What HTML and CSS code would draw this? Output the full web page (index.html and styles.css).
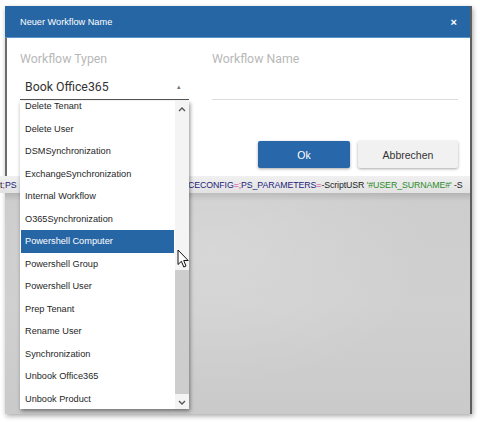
FILE: index.html
```html
<!DOCTYPE html>
<html lang="de">
<head>
<meta charset="utf-8">
<title>Neuer Workflow Name</title>
<link rel="stylesheet" href="styles.css">
</head>
<body>
<div class="shot">
  <header class="head">
    <span class="title">Neuer Workflow Name</span>
    <span class="close">×</span>
  </header>
  <div class="body">
    <div class="fields">
      <div class="field type">
        <label class="lbl">Workflow Typen</label>
        <div class="select"><span>Book Office365</span><span class="caret">▴</span></div>
      </div>
      <div class="field name">
        <label class="lbl">Workflow Name</label>
        <div class="input"></div>
      </div>
    </div>
    <div class="actions">
      <button class="btn ok">Ok</button>
      <button class="btn cancel">Abbrechen</button>
    </div>
  </div>
  <div class="code">
    <span class="code-left"><span class="k">t</span><span class="op">;</span><span class="v">PS</span></span>
    <span class="code-right"><span class="v">CECONFIG</span><span class="op">=;</span><span class="v">PS_PARAMETERS</span><span class="op">=</span><span class="k">-ScriptUSR </span><span class="s">'#USER_SURNAME#'</span><span class="k"> -S</span></span>
  </div>
  <div class="backdrop"></div>

  <div class="dropdown">
    <div class="list">
      <div class="items">
        <div class="item">Delete Tenant</div>
        <div class="item">Delete User</div>
        <div class="item">DSMSynchronization</div>
        <div class="item">ExchangeSynchronization</div>
        <div class="item">Internal Workflow</div>
        <div class="item">O365Synchronization</div>
        <div class="item active">Powershell Computer</div>
        <div class="item">Powershell Group</div>
        <div class="item">Powershell User</div>
        <div class="item">Prep Tenant</div>
        <div class="item">Rename User</div>
        <div class="item">Synchronization</div>
        <div class="item">Unbook Office365</div>
        <div class="item">Unbook Product</div>
      </div>
    </div>
    <div class="scrollbar">
      <div class="sb-btn"><svg width="8" height="5" viewBox="0 0 8 5"><polyline points="1,4 4,1 7,4" fill="none" stroke="#555" stroke-width="1.4"/></svg></div>
      <div class="track"><div class="thumb"></div></div>
      <div class="sb-btn"><svg width="8" height="5" viewBox="0 0 8 5"><polyline points="1,1 4,4 7,1" fill="none" stroke="#555" stroke-width="1.4"/></svg></div>
    </div>
  </div>

  <svg class="cursor" width="13" height="20" viewBox="0 0 13 20">
    <path d="M1 1 L1 15.5 L4.4 12.3 L6.8 18 L9 17 L6.7 11.5 L11.2 11.5 Z" fill="#fff" stroke="#111" stroke-width="1" stroke-linejoin="round"/>
  </svg>
</div>
</body>
</html>
```

FILE: styles.css
```css
html, body {
  margin: 0;
  padding: 0;
  background: #ffffff;
}
body {
  width: 480px;
  height: 422px;
  overflow: hidden;
  font-family: "Liberation Sans", Arial, sans-serif;
}
.shot {
  position: relative;
  margin: 6px 0 0 5px;
  width: 467px;
  height: 408px;
  box-sizing: border-box;
  border-right: 2px solid #5e5e5e;
  display: flex;
  flex-direction: column;
  box-shadow: 1px 2px 5px rgba(0, 0, 0, 0.35);
}
.head {
  height: 32px;
  flex: none;
  box-sizing: border-box;
  background: #2766a5;
  border-bottom: 1px solid #5a93c8;
  color: #fff;
  display: flex;
  align-items: center;
  justify-content: space-between;
  padding: 0 13px 0 15px;
}
.title {
  font-size: 9.2px;
}
.close {
  font-size: 11px;
  font-weight: bold;
}
.body {
  height: 138px;
  flex: none;
  box-sizing: border-box;
  background: #fff;
  border-left: 2px solid #6c6c6c;
  padding: 14px 12px 0 13px;
  display: flex;
  flex-direction: column;
}
.fields {
  display: flex;
  gap: 23px;
}
.field.type {
  width: 169px;
}
.field.name {
  flex: 1;
}
.lbl {
  display: block;
  font-family: Roboto, "Liberation Sans", sans-serif;
  font-size: 12.3px;
  line-height: 15px;
  color: #b8b8b8;
}
.select {
  margin-top: 13px;
  display: flex;
  justify-content: space-between;
  align-items: center;
  padding: 0 8px 4px 5px;
  border-bottom: 1.5px solid #555;
  font-family: Roboto, "Liberation Sans", sans-serif;
  font-size: 12.3px;
  line-height: 15px;
  color: #333;
}
.caret {
  font-size: 7px;
  color: #777;
}
.input {
  margin-top: 13px;
  height: 19px;
  border-bottom: 1px solid #dcdcdc;
}
.actions {
  margin-top: 41px;
  display: flex;
  justify-content: flex-end;
  gap: 8px;
}
.btn {
  height: 27px;
  border: none;
  border-radius: 2px;
  font-family: "Liberation Sans", Arial, sans-serif;
  font-size: 10.5px;
  box-shadow: 0 1px 3px rgba(0, 0, 0, 0.35);
  padding: 0;
}
.ok {
  width: 92px;
  background: #2868aa;
  color: #fff;
}
.cancel {
  width: 100px;
  background: #f1f1f1;
  color: #333;
}
.code {
  height: 17px;
  flex: none;
  margin-left: -5px;
  background: linear-gradient(#f0f0f0, #e2e2e2);
  display: flex;
  align-items: center;
  white-space: nowrap;
  overflow: hidden;
  font-size: 8.8px;
}
.code-left {
  width: 188px;
  flex: none;
}
.code-right {
  letter-spacing: -0.1px;
}
.code .k { color: #222; }
.code .op { color: #d0309a; }
.code .v { color: #22237a; }
.code .s { color: #2c8a2c; }
.backdrop {
  flex: 1;
  background:
    radial-gradient(ellipse at 45% 25%, rgba(255,255,255,0.18), rgba(255,255,255,0) 60%),
    linear-gradient(#b4b4b4 0, #cdcdcd 8px, #d0d0d0 50%, #cacaca 100%);
}
.dropdown {
  position: absolute;
  left: 15px;
  top: 95px;
  width: 169px;
  height: 308px;
  background: #fff;
  box-shadow: 1px 2px 4px rgba(0, 0, 0, 0.45);
  display: flex;
}
.list {
  width: 153px;
  padding-left: 1px;
  overflow: hidden;
}
.items {
  margin-top: -6px;
}
.item {
  height: 22.5px;
  line-height: 22.5px;
  padding-left: 4px;
  font-size: 9.2px;
  color: #262626;
  white-space: nowrap;
}
.item.active {
  background: #2766a5;
  color: #fff;
}
.scrollbar {
  margin-left: 1px;
  width: 14px;
  background: #f4f4f4;
  display: flex;
  flex-direction: column;
}
.sb-btn {
  height: 16px;
  flex: none;
  display: flex;
  align-items: center;
  justify-content: center;
}
.track {
  flex: 1;
}
.thumb {
  margin-top: 153px;
  height: 124px;
  background: #cdcdcd;
}
.cursor {
  position: absolute;
  left: 172px;
  top: 243px;
}
```
